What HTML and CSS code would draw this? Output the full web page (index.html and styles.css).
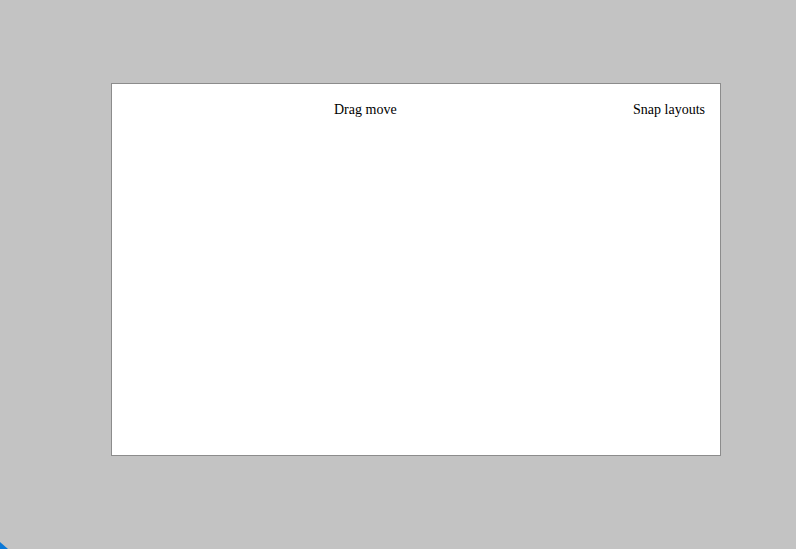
FILE: index.html
```html
<!DOCTYPE html>
<html>
<head>
<meta charset="utf-8">
<link rel="stylesheet" href="styles.css">
</head>
<body>
<div class="window">
  <div class="titlebar">
    <span class="drag">Drag move</span>
    <span class="snap">Snap layouts</span>
  </div>
</div>
<div class="corner"></div>
</body>
</html>
```
FILE: styles.css
```css
html, body {
  margin: 0;
  padding: 0;
  background: #c3c3c3;
  width: 796px;
  height: 549px;
  overflow: hidden;
}
body {
  padding-top: 83px;
  padding-left: 111px;
  box-sizing: border-box;
  font-family: "Liberation Serif", "Times New Roman", serif;
  font-size: 14px;
  color: #000;
}
.window {
  width: 610px;
  height: 373px;
  box-sizing: border-box;
  background: #fff;
  border: 1px solid #8c8c8c;
}
.titlebar {
  display: flex;
  padding: 18px 15px 0 222px;
}
.snap {
  margin-left: auto;
}
.corner {
  position: fixed;
  left: 0;
  top: 542px;
  width: 8px;
  height: 7px;
  background: #0a78d7;
  clip-path: polygon(0 0, 100% 100%, 0 100%);
}
```
